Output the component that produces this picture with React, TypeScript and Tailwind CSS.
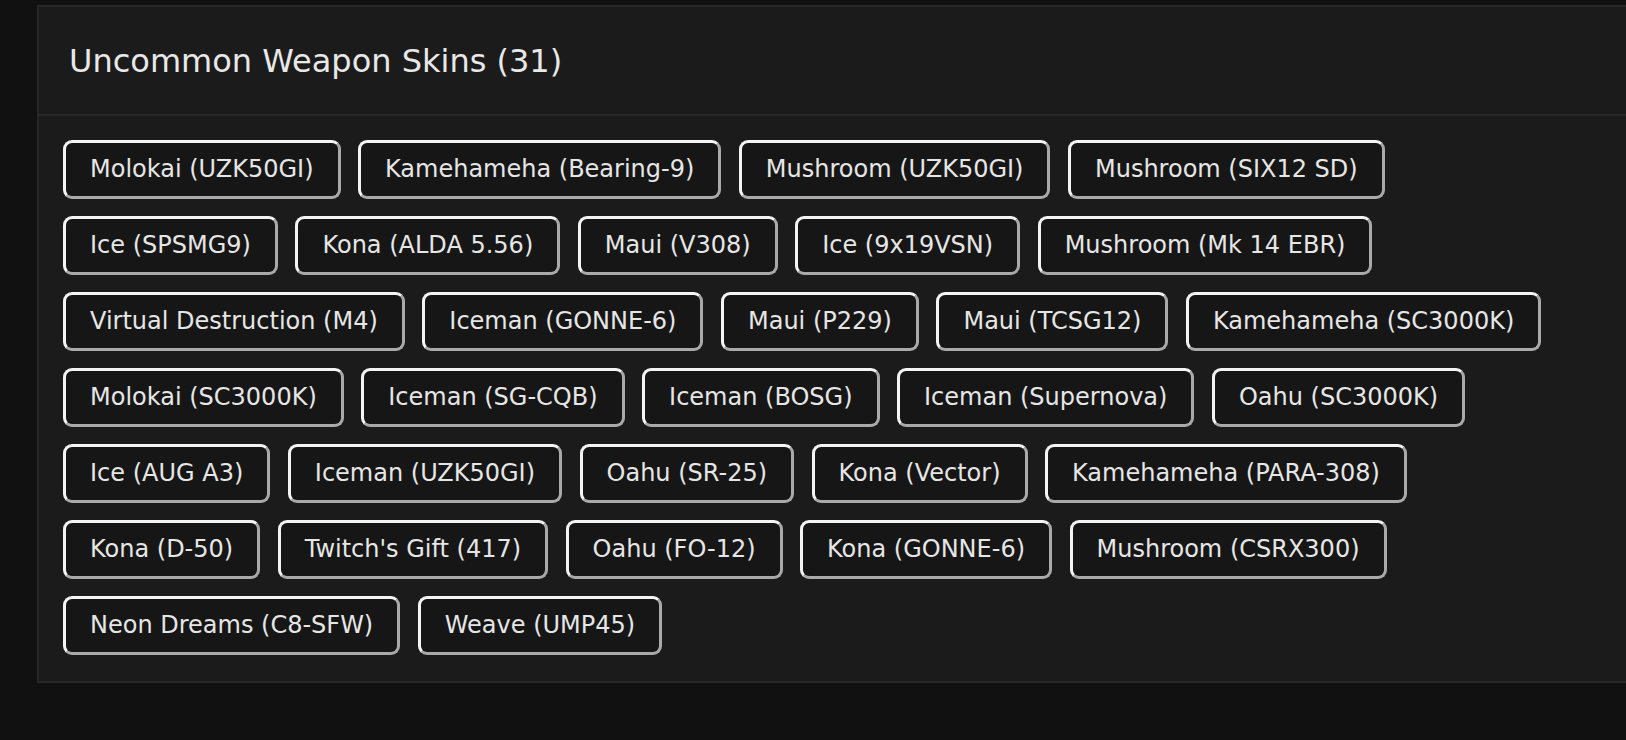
const ROWS: string[][] = [
  ["Molokai (UZK50GI)", "Kamehameha (Bearing-9)", "Mushroom (UZK50GI)", "Mushroom (SIX12 SD)"],
  ["Ice (SPSMG9)", "Kona (ALDA 5.56)", "Maui (V308)", "Ice (9x19VSN)", "Mushroom (Mk 14 EBR)"],
  ["Virtual Destruction (M4)", "Iceman (GONNE-6)", "Maui (P229)", "Maui (TCSG12)", "Kamehameha (SC3000K)"],
  ["Molokai (SC3000K)", "Iceman (SG-CQB)", "Iceman (BOSG)", "Iceman (Supernova)", "Oahu (SC3000K)"],
  ["Ice (AUG A3)", "Iceman (UZK50GI)", "Oahu (SR-25)", "Kona (Vector)", "Kamehameha (PARA-308)"],
  ["Kona (D-50)", "Twitch's Gift (417)", "Oahu (FO-12)", "Kona (GONNE-6)", "Mushroom (CSRX300)"],
  ["Neon Dreams (C8-SFW)", "Weave (UMP45)"],
];

const total = ROWS.reduce((n, r) => n + r.length, 0);

const SkinTag = ({ name }: { name: string }) => (
  <button
    type="button"
    className="shrink-0 whitespace-nowrap rounded-[9px] border-[3px] border-[#f4f4f4] border-r-[#a9a9a9] border-b-[#a9a9a9] bg-[#161616] px-[24px] py-[8px] text-[24px] leading-[37px] text-[#e6e6e6]"
  >
    {name}
  </button>
);

export default function App() {
  return (
    <div
      className="h-[740px] w-full overflow-hidden bg-[#111111] pt-[5px] pl-[37px]"
      style={{ fontFamily: '"DejaVu Sans", sans-serif' }}
    >
      <section className="w-[1640px] border-2 border-[#272727] bg-[#1b1b1b]">
        <header className="flex h-[109px] items-center border-b-2 border-[#272727] px-[30px]">
          <h2 className="text-[32px] leading-none text-[#e8e8e8]">
            Uncommon Weapon Skins ({total})
          </h2>
        </header>
        <div className="flex flex-col gap-[17px] px-[24px] pt-[24px] pb-[26px]">
          {ROWS.map((row, i) => (
            <div key={i} className="flex gap-[17.5px]">
              {row.map((name) => (
                <SkinTag key={name} name={name} />
              ))}
            </div>
          ))}
        </div>
      </section>
    </div>
  );
}
